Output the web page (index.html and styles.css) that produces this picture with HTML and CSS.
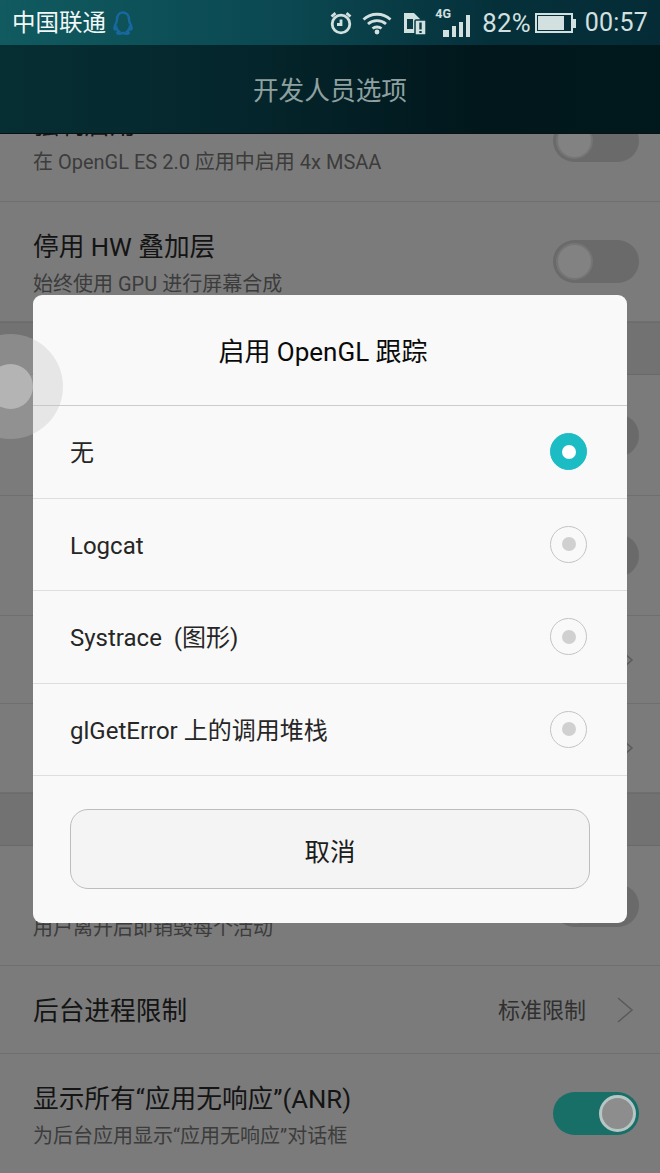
FILE: index.html
```html
<!DOCTYPE html>
<html lang="zh-CN">
<head>
<meta charset="utf-8">
<title>开发人员选项</title>
<link rel="stylesheet" href="styles.css">
</head>
<body>
<div class="screen">
  <header class="statusbar">
    <div class="status-left">
      <span class="carrier">中国联通</span>
      <svg class="qq" width="22" height="24" viewBox="0 0 22 24"><path d="M11 1.5C6.8 1.5 5 4.8 5 8.5c0 1.6-.3 2.6-1.2 4.2C2.6 15 2 17.5 2.8 18.3c.5.4 1.2-.2 1.8-1.2.4 1.4 1.200 2.500 2.200 3.300-1.200.5-1.800 1.100-1.600 1.800.3.800 3 .8 5.800-.3 2.800 1.100 5.500 1.100 5.800.3.2-.7-.4-1.300-1.600-1.800 1-.8 1.800-1.900 2.200-3.300.6 1 1.300 1.600 1.800 1.200.8-.8.2-3.300-1-5.600C17.300 11.100 17 10.100 17 8.500c0-3.700-1.800-7-6-7z"/></svg>
    </div>
    <div class="status-right">
      <svg class="ico-alarm" width="24" height="24" viewBox="0 0 24 24"><circle cx="12" cy="13" r="8.800"/><path d="M12 8.500V13.500H8M2.500 5.500 6.500 2.200M21.500 5.500 17.500 2.200"/></svg>
      <svg class="ico-wifi" width="30" height="24" viewBox="0 0 30 24"><path d="M1.500 8.500C9 1.500 21 1.500 28.500 8.500M6 13C11 8.500 19 8.500 24 13M10.500 17.500C13 15.500 17 15.500 19.500 17.500"/><circle cx="15" cy="21" r="2.400"/></svg>
      <svg class="ico-sim" width="23" height="24" viewBox="0 0 23 24"><path class="sim-body" d="M1 2H11L17 8V22H1Z"/><path class="sim-cut" d="M4 8H10V18H4Z"/><rect class="sim-badge" x="12" y="9" width="11" height="15" rx="1"/><path class="sim-mark" d="M17.500 11.500V18.500M17.500 20V22"/></svg>
      <div class="net">
        <span class="net-type">4G</span>
        <div class="bars"><i class="bar b1"></i><i class="bar b2"></i><i class="bar b3"></i><i class="bar b4"></i></div>
      </div>
      <span class="pct">82%</span>
      <div class="battery"><div class="battery-body"><div class="battery-fill"></div></div><div class="battery-tip"></div></div>
      <span class="clock">00:57</span>
    </div>
  </header>

  <div class="appbar"><h1 class="appbar-title">开发人员选项</h1></div>

  <main class="list">
    <section class="row row-first">
      <div class="row-text"><div class="row-title">强制启用 4x MSAA</div><div class="row-sub">在 OpenGL ES 2.0 应用中启用 4x MSAA</div></div>
      <div class="toggle"><div class="thumb"></div></div>
    </section>
    <section class="row">
      <div class="row-text"><div class="row-title">停用 HW 叠加层</div><div class="row-sub">始终使用 GPU 进行屏幕合成</div></div>
      <div class="toggle"><div class="thumb"></div></div>
    </section>
    <div class="band"></div>
    <section class="row"><div class="row-text"></div><div class="toggle"><div class="thumb"></div></div></section>
    <section class="row"><div class="row-text"></div><div class="toggle"><div class="thumb"></div></div></section>
    <section class="row">
      <div class="row-text"></div>
      <svg class="chev" width="20" height="28" viewBox="0 0 20 28"><path d="M3 2 17 14 3 26"/></svg>
    </section>
    <section class="row">
      <div class="row-text"></div>
      <svg class="chev" width="20" height="28" viewBox="0 0 20 28"><path d="M3 2 17 14 3 26"/></svg>
    </section>
    <div class="band"></div>
    <section class="row">
      <div class="row-text"><div class="row-title row-title-blank"></div><div class="row-sub">用户离开后即销毁每个活动</div></div>
      <div class="toggle"><div class="thumb"></div></div>
    </section>
    <section class="row">
      <div class="row-title row-title-single">后台进程限制</div>
      <div class="row-end"><span class="row-value">标准限制</span>
      <svg class="chev" width="20" height="28" viewBox="0 0 20 28"><path d="M3 2 17 14 3 26"/></svg></div>
    </section>
    <section class="row">
      <div class="row-text"><div class="row-title">显示所有“应用无响应”(ANR)</div><div class="row-sub">为后台应用显示“应用无响应”对话框</div></div>
      <div class="toggle toggle-on"><div class="thumb"></div></div>
    </section>
  </main>

  <div class="dialog">
    <div class="dialog-title">启用 OpenGL 跟踪</div>
    <div class="option"><span class="option-label">无</span><div class="radio radio-on"></div></div>
    <div class="option"><span class="option-label">Logcat</span><div class="radio"></div></div>
    <div class="option"><span class="option-label option-label-wide">Systrace (图形)</span><div class="radio"></div></div>
    <div class="option"><span class="option-label">glGetError 上的调用堆栈</span><div class="radio"></div></div>
    <div class="dialog-footer"><button class="cancel" type="button">取消</button></div>
  </div>

  <div class="float-ball"><div class="float-core"></div></div>
</div>
</body>
</html>
```

FILE: styles.css
```css
* { box-sizing: border-box; }
html, body { margin: 0; padding: 0; }
body { background: #7b7b7b; font-family: Roboto, "Noto Sans CJK SC", sans-serif; }

.screen {
  position: relative;
  width: 660px;
  height: 1173px;
  overflow: hidden;
  background: #7b7b7b;
}

/* status bar */
.statusbar {
  position: relative;
  z-index: 2;
  height: 45px;
  display: flex;
  justify-content: space-between;
  align-items: center;
  padding: 1px 12px 0;
  background: linear-gradient(90deg, #105a60 0%, #0b4750 45%, #05303a 75%, #052c36 100%);
  color: #d3e0e0;
}
.status-left, .status-right { display: flex; align-items: center; }
.carrier { font-size: 23.500px; line-height: 44px; color: #f2f7f7; }
.qq { margin-left: 6px; fill: none; stroke: #17689f; stroke-width: 2.400; }
.ico-alarm { fill: none; stroke: #d3e0e0; stroke-width: 2.800; margin-right: 9px; }
.ico-wifi { margin-right: 11px; fill: none; stroke: #d3e0e0; stroke-width: 2.800; }
.ico-wifi circle { fill: #d3e0e0; stroke: none; }
.ico-sim { margin-right: 9px; }
.sim-body { fill: #d3e0e0; }
.sim-cut { fill: #0a3c45; }
.sim-badge { fill: #d3e0e0; stroke: #0a3c45; stroke-width: 1.500; }
.sim-mark { fill: none; stroke: #0a3c45; stroke-width: 2.400; }
.net { position: relative; width: 37px; height: 24px; margin-right: 10px; }
.net-type {
  position: absolute;
  left: 0;
  top: -4px;
  font-size: 12.500px;
  line-height: 14px;
  font-weight: 700;
  color: #d3e0e0;
}
.bars { position: absolute; left: 8px; bottom: -2px; display: flex; align-items: flex-end; gap: 3px; }
.bar { display: block; background: #d3e0e0; }
.b1 { width: 6px; height: 7px; }
.b2 { width: 4px; height: 11px; }
.b3 { width: 4px; height: 15px; }
.b4 { width: 4px; height: 22px; }
.pct, .clock { font-size: 25px; line-height: 44px; letter-spacing: .2px; }
.pct { font-size: 25.800px; margin-right: 4px; }
.battery { display: flex; align-items: center; margin-right: 9px; }
.battery-body { width: 38px; height: 20px; border: 2px solid #d3e0e0; padding: 1px; }
.battery-fill { width: 82%; height: 100%; background: #d3e0e0; }
.battery-tip { width: 3px; height: 9px; background: #d3e0e0; }

/* app bar */
.appbar {
  position: relative;
  z-index: 1;
  height: 89px;
  display: flex;
  align-items: center;
  justify-content: center;
  padding-top: 3px;
  background: linear-gradient(90deg, #062f33 0%, #04252b 40%, #01171c 72%, #01181c 100%);
  box-shadow: inset 0 -1px 0 #0b1113;
}
.appbar-title { margin: 0; font-size: 25.700px; font-weight: 400; line-height: 86px; color: #8fa0a0; }

/* background list */
.list {
  margin-top: -52px;
  display: grid;
  grid-template-rows: 120px 120px 53px 121px 120px 88px 89px 53px 120px 88px 120px;
}
.row {
  display: flex;
  align-items: center;
  justify-content: space-between;
  padding: 0 21px 0 33px;
  border-bottom: 1px solid #6f6f6f;
}
.row-first { padding-bottom: 2px; }
.band { background: #727272; border-bottom: 1px solid #696969; border-top: 1px solid #6c6c6c; }
.row-text { padding-top: 7px; }
.row-first .row-text { padding-top: 5px; }
.row-title { font-size: 25.700px; line-height: 38px; color: #141414; }
.row-title-blank { height: 38px; }
.row-title-single { margin-top: 2px; }
.row-sub { font-size: 20px; line-height: 36px; color: #3c3c3c; }
.row-end { display: flex; align-items: center; gap: 29px; margin-right: 4px; }
.row-value { font-size: 22px; color: #303030; margin-bottom: 3px; }
.chev { fill: none; stroke: #5a5a5a; stroke-width: 1.500; margin-right: 4px; }
.row-end .chev { margin-right: 0; }

.toggle {
  width: 86px;
  height: 43px;
  padding: 3px;
  border-radius: 22px;
  background: #6a6a6a;
}
.thumb {
  width: 37px;
  height: 37px;
  border-radius: 50%;
  background: #828282;
  border: 2px solid #757575;
}
.toggle-on { background: #186f67; display: flex; justify-content: flex-end; }
.toggle-on .thumb { background: #8d8d8d; border: 3px solid #b6c6c4; }

/* dialog */
.dialog {
  position: absolute;
  z-index: 3;
  left: 33px;
  top: 295px;
  width: 594px;
  height: 628px;
  border-radius: 9px;
  background: #f9f9f9;
  overflow: hidden;
  color: #262626;
}
.dialog-title {
  height: 111px;
  display: flex;
  align-items: center;
  justify-content: center;
  padding: 0 14px 2px 0;
  font-size: 26px;
  color: #0a0a0a;
  border-bottom: 1px solid #cccccc;
}
.option {
  height: 92.500px;
  display: flex;
  align-items: center;
  justify-content: space-between;
  padding: 0 40px 0 37px;
  font-size: 24px;
  border-bottom: 1px solid #dedede;
}
.option-label { line-height: 32px; margin-top: 3px; }
.option-label-wide { word-spacing: 6px; }
.radio {
  position: relative;
  width: 37px;
  height: 37px;
  border-radius: 50%;
  border: 1px solid #c4c4c4;
  display: flex;
  align-items: center;
  justify-content: center;
}
.radio::after {
  content: "";
  width: 14px;
  height: 14px;
  border-radius: 50%;
  background: #d0d0d0;
}
.radio-on { background: #1cbcc5; border-color: #1cbcc5; }
.radio-on::after { background: #fff; }
.dialog-footer { padding: 33px 37px 0; }
.cancel {
  display: block;
  width: 100%;
  height: 80px;
  padding: 0;
  border: 1px solid #bdbdbd;
  border-radius: 18px;
  background: #f4f4f4;
  font-family: inherit;
  font-size: 25.500px;
  color: #1c1c1c;
}

/* floating ball */
.float-ball {
  position: absolute;
  z-index: 4;
  left: -42px;
  top: 334px;
  width: 105px;
  height: 105px;
  border-radius: 50%;
  background: rgba(192, 192, 192, .33);
  display: flex;
  align-items: center;
  justify-content: center;
}
.float-core { width: 45px; height: 45px; border-radius: 50%; background: #b4b4b4; }
```
